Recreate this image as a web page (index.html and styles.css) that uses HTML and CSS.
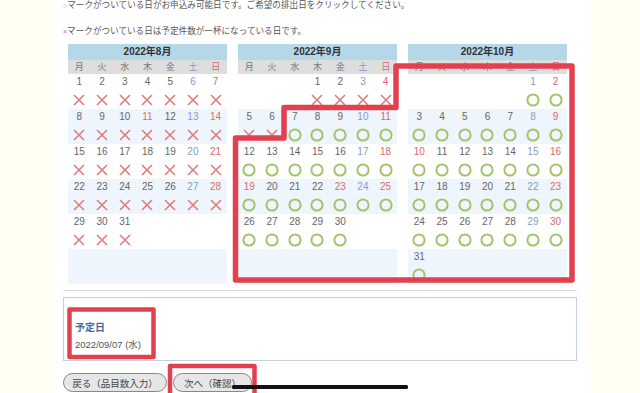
FILE: index.html
```html
<!DOCTYPE html>
<html lang="ja">
<head>
    <meta charset="UTF-8">
    <meta name="viewport" content="width=device-width, initial-scale=1.0">
    <title>排出日の選択</title>
    <link rel="stylesheet" href="styles.css">
</head>
<body>

<div class="page">
    <p class="note note-ok"><span class="sym sym-ok">○</span>マークがついている日がお申込み可能日です。ご希望の排出日をクリックしてください。</p>
    <p class="note note-ng"><span class="sym sym-ng">×</span>マークがついている日は予定件数が一杯になっている日です。</p>

    <div class="months" id="months"></div>

    <div class="result">
        <div class="result-box">
            <div class="result-label">予定日</div>
            <div class="result-date">2022/09/07 (水)</div>
        </div>
    </div>

    <div class="buttons">
        <button type="button" class="btn btn-back">戻る（品目数入力）</button>
        <button type="button" class="btn btn-next">次へ（確認）</button>
    </div>
</div>

<svg class="overlay" width="640" height="393" viewBox="0 0 640 393">
    <polygon class="mark-line" points="396,66 572,66 572,280 235.5,280 235.5,138 284,138 284,107.5 396,107.5"/>
    <rect class="mark-line mark-box" x="69.5" y="309.5" width="84" height="47.5"/>
    <rect class="mark-line mark-box" x="170" y="366" width="84.5" height="40"/>
    <rect class="home-bar" x="232" y="385" width="176" height="4" rx="1.5"/>
</svg>

<script>
    const WEEKDAYS = ['月', '火', '水', '木', '金', '土', '日'];
    const MONTHS = [
        { year: 2022, month: 8, holidays: [11], full: function(d) { return true; } },
        { year: 2022, month: 9, holidays: [19, 23], full: function(d) { return d <= 6; } },
        { year: 2022, month: 10, holidays: [10], full: function(d) { return false; } }
    ];

    const ICON_NG = '<svg width="12" height="12" viewBox="0 0 12 12"><path d="M1 1L11 11M11 1L1 11" stroke="#e27b7b" stroke-width="1.6"/></svg>';
    const ICON_OK = '<svg width="14" height="14" viewBox="0 0 14 14"><circle cx="7" cy="7" r="5.6" fill="none" stroke="#a2c46c" stroke-width="2"/></svg>';

    function buildMonth(m) {
        const cal = document.createElement('div');
        cal.className = 'cal';

        let html = '<div class="cal-title">' + m.year + '年' + m.month + '月</div>';
        html += '<div class="cal-weekdays">';
        WEEKDAYS.forEach(function(w, i) {
            const cls = i === 5 ? ' sat' : (i === 6 ? ' sun' : '');
            html += '<div class="wd' + cls + '">' + w + '</div>';
        });
        html += '</div>';

        const first = (new Date(m.year, m.month - 1, 1).getDay() + 6) % 7;
        const last = new Date(m.year, m.month, 0).getDate();

        for (let w = 0; w < 6; w++) {
            html += '<div class="week' + (w % 2 ? ' week-alt' : '') + '">';
            for (let i = 0; i < 7; i++) {
                const d = w * 7 + i - first + 1;
                if (d < 1 || d > last) {
                    html += '<div class="day"></div>';
                    continue;
                }
                let cls = '';
                if (i === 6 || m.holidays.includes(d)) cls = ' sun';
                else if (i === 5) cls = ' sat';
                html += '<div class="day"><span class="num' + cls + '">' + d + '</span>';
                html += '<span class="mark">' + (m.full(d) ? ICON_NG : ICON_OK) + '</span></div>';
            }
            html += '</div>';
        }

        cal.innerHTML = html;
        return cal;
    }

    const wrap = document.getElementById('months');
    MONTHS.forEach(function(m) {
        wrap.appendChild(buildMonth(m));
    });
</script>

</body>
</html>
```

FILE: styles.css
```css
body {
    font-family: 'Liberation Sans', 'Noto Sans CJK JP', sans-serif;
    background-color: #fffef0;
    color: #555;
    margin: 0;
    position: relative;
    height: 393px;
    overflow: hidden;
}
.page {
    width: 514px;
    height: 393px;
    margin: 0 auto;
    padding: 0 13px;
    background: #fff;
}
.note {
    margin: 0;
    font-size: 8.6px;
    line-height: 10px;
    color: #555;
    white-space: nowrap;
}
.note-ok {
    margin-bottom: 15px;
}
.sym {
    font-size: 7px;
}
.sym-ok {
    color: #b5b08a;
}
.sym-ng {
    color: #e06a6a;
}
.months {
    display: flex;
    gap: 11px;
    padding-left: 5px;
    margin-top: 7px;
}
.cal {
    width: 159px;
}
.cal-title {
    height: 16px;
    line-height: 16px;
    background: #b5d7e8;
    text-align: center;
    font-weight: bold;
    font-size: 10px;
    color: #333;
}
.cal-weekdays, .week {
    display: grid;
    grid-template-columns: repeat(7, 1fr);
}
.wd {
    height: 14px;
    line-height: 14px;
    background: #dedede;
    text-align: center;
    font-size: 9px;
    color: #777;
}
.week {
    height: 35px;
}
.week-alt {
    background: #eef5fd;
}
.day {
    display: flex;
    flex-direction: column;
    align-items: center;
}
.num {
    height: 16px;
    line-height: 16px;
    font-size: 10px;
    color: #666;
}
.mark {
    height: 19px;
    display: flex;
    align-items: center;
    justify-content: center;
}
.sat {
    color: #7f9ec2;
}
.sun {
    color: #d86b6b;
}
.result {
    margin-top: 6px;
    border-top: 1px solid #dcdcdc;
    padding-top: 6px;
}
.result-box {
    height: 64px;
    border: 1px solid #c6d0da;
    padding: 23px 11px 0;
    box-sizing: border-box;
}
.result-label {
    font-size: 10px;
    line-height: 14px;
    font-weight: bold;
    color: #46689a;
}
.result-date {
    margin-top: 3px;
    font-size: 9.5px;
    line-height: 14px;
    color: #555;
}
.buttons {
    display: flex;
    gap: 6px;
    margin-top: 12px;
}
.btn {
    height: 19px;
    padding: 0;
    border: 1px solid #888;
    border-radius: 10px;
    background: #e6e6e6;
    font-family: 'Liberation Sans', 'Noto Sans CJK JP', sans-serif;
    font-size: 9.5px;
    color: #444;
}
.btn-back {
    width: 104px;
}
.btn-next {
    width: 79px;
}
.overlay {
    position: absolute;
    left: 0;
    top: 0;
    pointer-events: none;
}
.mark-line {
    fill: none;
    stroke: #e2404f;
    stroke-width: 5.5;
    stroke-linejoin: round;
}
.mark-box {
    stroke-width: 4.5;
}
.home-bar {
    fill: #111;
}
```
